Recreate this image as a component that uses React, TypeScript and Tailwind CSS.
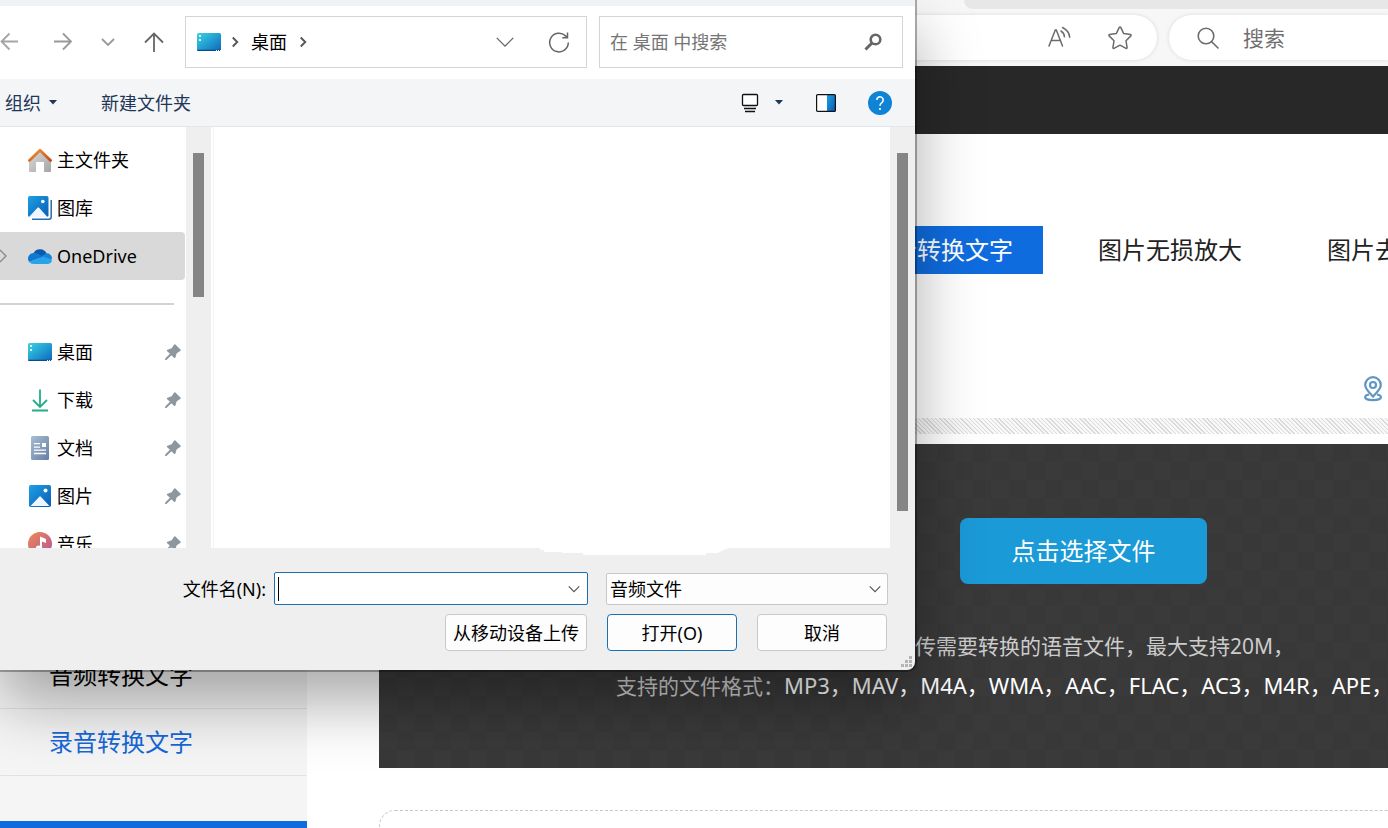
import React from "react";

type IconProps = { className?: string };

const Chevron = ({ className = "" }: IconProps) => (
  <svg viewBox="0 0 16 16" className={className} fill="none" stroke="currentColor" aria-hidden="true">
    <path d="M2 5l6 6 6-6" />
  </svg>
);

const DesktopIcon = () => (
  <svg viewBox="0 0 24 24" className="size-6 shrink-0" aria-hidden="true">
    <defs>
      <linearGradient id="desk" x1="0" y1="0" x2="1" y2="1">
        <stop offset="0" stopColor="#3ed3e0" />
        <stop offset="0.5" stopColor="#219fd2" />
        <stop offset="1" stopColor="#1265b8" />
      </linearGradient>
    </defs>
    <rect y="3" width="24" height="18" rx="1.5" fill="url(#desk)" />
    <path d="M0 19.8h24v0a1.4 1.4 0 0 1-1.4 1.2H1.4A1.4 1.4 0 0 1 0 19.8z" fill="#0b4a8c" />
    <path d="M2 5h2v2H2zM2 9h2v2H2z" fill="#d9fbff" />
    <path d="M19 20h1v1h-1zM21 20h1v1h-1zM23 20h1v1h-1z" fill="#e6f4ff" />
  </svg>
);

const HomeIcon = () => (
  <svg viewBox="0 0 24 24" className="size-6 shrink-0" aria-hidden="true">
    <defs>
      <linearGradient id="wall" x1="0" y1="0" x2="1" y2="1">
        <stop offset="0" stopColor="#dcdcdc" />
        <stop offset="1" stopColor="#a5a5a5" />
      </linearGradient>
      <linearGradient id="roof" x1="0" y1="0" x2="1" y2="1">
        <stop offset="0" stopColor="#f09a3a" />
        <stop offset="1" stopColor="#c5491a" />
      </linearGradient>
    </defs>
    <path d="M1 12L12 2l11 10v11a1 1 0 0 1-1 1h-6V14H8v10H2a1 1 0 0 1-1-1z" fill="url(#wall)" />
    <path d="M1.4 12.400L12 2.200l10.600 10.200" fill="none" stroke="url(#roof)" strokeWidth="2.800" strokeLinecap="round" strokeLinejoin="round" />
  </svg>
);

const BlueGradient = ({ id }: { id: string }) => (
  <defs>
    <linearGradient id={id} x1="0" y1="0" x2="1" y2="1">
      <stop offset="0" stopColor="#1ba2e4" />
      <stop offset="1" stopColor="#0c5bb5" />
    </linearGradient>
  </defs>
);

const GalleryIcon = () => (
  <svg viewBox="0 0 24 24" className="size-6 shrink-0" aria-hidden="true">
    <BlueGradient id="gal" />
    <path d="M4 23.2h17a2.2 2.2 0 0 0 2.2-2.2V4" fill="none" stroke="#276bb4" strokeWidth="1.5" />
    <rect width="20.5" height="21" rx="1.8" fill="url(#gal)" />
    <path d="M1 21l8.500-9.200a1 1 0 0 1 1.500 0l8.500 9.200z" fill="#eef7ff" />
    <circle cx="14.8" cy="5.5" r="1.8" fill="#fff" />
  </svg>
);

const PictureIcon = () => (
  <svg viewBox="0 0 24 24" className="size-6 shrink-0" aria-hidden="true">
    <BlueGradient id="pic" />
    <rect x="1" y="1" width="22" height="22" rx="1.8" fill="url(#pic)" />
    <path d="M2.5 22l8.8-9.3a1 1 0 0 1 1.5 0L21.500 22z" fill="#eef7ff" />
    <circle cx="17.500" cy="6.500" r="2" fill="#fff" />
  </svg>
);

const CloudIcon = () => (
  <svg viewBox="0 0 24 24" className="size-6 shrink-0" aria-hidden="true">
    <path d="M5.300 9.500a7.300 7.300 0 0 1 13.400.3l-5 5.200-8-4z" fill="#0a58b0" />
    <path d="M13.500 12l4.700-2.600a5.200 5.200 0 0 1 5.800 5.400l-5.500 2z" fill="#1583d8" />
    <path d="M5.400 9.100a5.500 5.500 0 0 0-4.200 8.900L15 12.700 9.800 9.800a6 6 0 0 0-4.400-.7z" fill="#0f78d0" />
    <path d="M1.100 17.900L15 12.600l8.900 3a4.300 4.300 0 0 1-4.100 4.400H5.600a5.600 5.600 0 0 1-4.500-2.100z" fill="#2aa2ea" />
  </svg>
);

const DownloadIcon = () => (
  <svg viewBox="0 0 24 24" className="size-6 shrink-0" fill="none" stroke="#22ad8c" strokeWidth="1.800" aria-hidden="true">
    <path d="M12 1.500v17M5 12l7 7 7-7M4 22.500h16" />
  </svg>
);

const DocumentIcon = () => (
  <svg viewBox="0 0 24 24" className="size-6 shrink-0" aria-hidden="true">
    <defs>
      <linearGradient id="doc" x1="0" y1="0" x2="1" y2="1">
        <stop offset="0" stopColor="#a9bdd3" />
        <stop offset="1" stopColor="#6580a3" />
      </linearGradient>
    </defs>
    <rect x="3" width="18" height="24" rx="1.500" fill="url(#doc)" />
    <path d="M6 7.700h6M6 11.200h6M6 14.200h12M6 17.500h12" stroke="#fff" strokeWidth="1.300" />
    <rect x="14" y="7" width="4" height="4" fill="#fff" />
  </svg>
);

const MusicIcon = () => (
  <svg viewBox="0 0 24 24" className="size-6 shrink-0" aria-hidden="true">
    <defs>
      <linearGradient id="mus" x1="0" y1="0" x2="1" y2="1">
        <stop offset="0" stopColor="#ec8a52" />
        <stop offset="1" stopColor="#b8529a" />
      </linearGradient>
    </defs>
    <circle cx="12" cy="12" r="12" fill="url(#mus)" />
    <path d="M12 4.500l6 2.500v4L14 9.500v7a3.200 3.200 0 1 1-2-2.800z" fill="#fff" />
  </svg>
);

const PinIcon = () => (
  <svg viewBox="0 0 16 16" className="size-4 shrink-0" fill="#8c979f" aria-hidden="true">
    <path d="M9 .7a.9.9 0 0 1 1.400-.2l5 5a.9.9 0 0 1-.2 1.400l-3.500 2.400-1.300 4.200a.9.9 0 0 1-1.400.3L6.400 11.300 1.500 15.900H.2v-1.300l4.700-4.900-2.700-2.500a.9.900 0 0 1 .3-1.500l4.200-1.400z" />
  </svg>
);

const places = [
  { label: "桌面", icon: <DesktopIcon /> },
  { label: "下载", icon: <DownloadIcon /> },
  { label: "文档", icon: <DocumentIcon /> },
  { label: "图片", icon: <PictureIcon /> },
  { label: "音乐", icon: <MusicIcon /> },
];

function BrowserBar() {
  return (
    <div className="flex shrink-0 flex-col bg-[#f7f7f7]">
      <div className="flex justify-end">
        <div className="h-[9px] w-[424px] rounded-bl-[9px] bg-[#e7e7e7]" />
      </div>
      <div className="flex gap-3 py-1.5 text-[#6b6b6b]">
        <div className="flex h-[45px] flex-1 items-center justify-end gap-9 rounded-r-full bg-white pr-6 shadow-[0_0_4px_rgba(0,0,0,0.12)]">
          <button aria-label="朗读" className="size-6">
            <svg viewBox="0 0 24 24" fill="none" stroke="currentColor" strokeWidth="1.500" strokeLinecap="round">
              <path d="M2 20L8.300 4h1L15.500 20M4.500 14.500h9M14 5c2 1.200 3.200 3.200 3.400 5.700M15.500 1.500c4.200 2 6.800 5.300 7.200 9.700" />
            </svg>
          </button>
          <button aria-label="收藏" className="size-[26px]">
            <svg viewBox="0 0 26 26" fill="none" stroke="currentColor" strokeWidth="1.500" strokeLinejoin="round">
              <path d="M12.300 2.400a.8.8 0 0 1 1.400 0l3 6.200 6.800 1a.8.800 0 0 1 .4 1.300l-4.900 4.900 1.100 6.800a.8.800 0 0 1-1.100.8L13 20.200l-6 3.200a.8.8 0 0 1-1.100-.8L7 15.800l-4.900-4.900a.8.8 0 0 1 .4-1.300l6.800-1z" />
            </svg>
          </button>
        </div>
        <label className="flex h-[45px] w-[219px] items-center gap-6 rounded-l-full bg-white pl-7 shadow-[0_0_4px_rgba(0,0,0,0.12)]">
          <svg viewBox="0 0 22 22" className="size-[22px] shrink-0" fill="none" stroke="currentColor" strokeWidth="1.600" strokeLinecap="round" aria-hidden="true">
            <circle cx="9" cy="9" r="7.800" />
            <path d="M14.700 14.700L21 21" />
          </svg>
          <input aria-label="搜索" placeholder="搜索" className="w-full min-w-0 text-[21px] outline-none placeholder:text-[#6f6f6f]" />
        </label>
      </div>
    </div>
  );
}

function Page() {
  return (
    <div className="flex flex-1 flex-col bg-white text-2xl text-[#222]">
      <BrowserBar />
      <div className="h-[68px] shrink-0 bg-[#282828]" />
      <nav className="flex gap-[25px] pt-[92px] pl-[839px] whitespace-nowrap">
        <a href="#record" className="flex h-12 shrink-0 items-center bg-[#0f6cdf] px-[30px] text-white">录音转换文字</a>
        <a href="#enlarge" className="flex h-12 shrink-0 items-center px-[30px]">图片无损放大</a>
        <a href="#remove" className="flex h-12 shrink-0 items-center px-[30px]">图片去</a>
      </nav>
      <div className="flex justify-end pt-[102px] pr-1.5 pb-4">
        <svg viewBox="0 0 18 26" className="h-[26px] w-[18px]" fill="none" stroke="#5f96c4" strokeWidth="2.200" aria-hidden="true">
          <path d="M9 20.500C5.500 16.500 1.200 13.200 1.200 9a7.800 7.800 0 0 1 15.600 0c0 4.200-4.300 7.500-7.800 11.500z" />
          <circle cx="9" cy="9" r="3" />
          <path d="M5 18.500c-2.600.4-3.900 1.400-3.900 2.700 0 1.700 3.500 2.900 7.900 2.900s7.900-1.200 7.900-2.900c0-1.300-1.300-2.300-3.900-2.700" />
        </svg>
      </div>
      <div className="h-4 shrink-0 bg-[repeating-linear-gradient(45deg,#dadada_0_1px,#f8f8f8_1px_3px)]" />
      <div className="flex flex-1 gap-[72px] pt-2.5">
        <aside className="flex w-[307px] shrink-0 flex-col bg-[#f5f5f5]">
          <div className="h-[198px] shrink-0" />
          <a href="#audio" className="flex h-[67px] items-center border-b border-[#e2e2e2] pl-[49px] text-black">音频转换文字</a>
          <a href="#record" className="flex h-[67px] items-center border-b border-[#e2e2e2] pl-[49px] text-[#1567d8]">录音转换文字</a>
          <div className="mt-[45px] min-h-[7px] flex-1 bg-[#0f6cdf]" />
        </aside>
        <main className="flex w-[1409px] shrink-0 flex-col">
          <section className="flex h-[324px] flex-col items-center bg-[#393939] bg-[repeating-conic-gradient(#383838_0_25%,#3a3a3a_0_50%)] bg-[length:36px_36px] pt-[74px] text-[21px] leading-[39px] whitespace-nowrap text-[#ccc]">
            <button className="h-[66px] w-[247px] rounded-lg bg-[#1a9ad7] text-2xl text-white">点击选择文件</button>
            <p className="pt-[43px]">请上传需要转换的语音文件，最大支持20M，</p>
            <p className="w-full pl-[237px]">
              支持的文件格式：
              <span className="text-[22px] text-white">MP3，MAV，M4A，WMA，AAC，FLAC，AC3，M4R，APE，</span>
            </p>
          </section>
          <div className="mt-[42px] min-h-[18px] flex-1 rounded-t-2xl border border-b-0 border-dashed border-[#c8c8c8]" />
        </main>
      </div>
    </div>
  );
}

function DialogAddressRow() {
  return (
    <div className="flex items-center bg-white pt-2.5 pr-3 pb-[11px] text-[#777]">
      <div className="flex shrink-0 items-center gap-7">
        <button aria-label="后退" className="w-[22px] text-[#a5a5a5]">
          <svg viewBox="0 0 22 22" fill="none" stroke="currentColor" strokeWidth="1.800"><path d="M18 10.500H1.500M9.500 2.500l-8 8 8 8" /></svg>
        </button>
        <button aria-label="前进" className="w-[22px] text-[#999]">
          <svg viewBox="0 0 22 22" fill="none" stroke="currentColor" strokeWidth="1.800"><path d="M4 10.500h17M13 2.500l8 8-8 8" /></svg>
        </button>
        <button aria-label="最近位置" className="w-4 text-[#999]"><Chevron className="size-4 stroke-[1.800px]" /></button>
        <button aria-label="上移" className="w-5 text-[#666]">
          <svg viewBox="0 0 20 20" fill="none" stroke="currentColor" strokeWidth="1.800"><path d="M10 20V1.500M1 10.500l9-9 9 9" /></svg>
        </button>
      </div>
      <div className="ml-[21px] flex h-[52px] w-[402px] shrink-0 items-center border border-[#d5d5d5] pl-[11px] text-black">
        <DesktopIcon />
        <Chevron className="ml-2 size-3 -rotate-90 stroke-[#555] stroke-[2.500px]" />
        <button className="mx-2.5">桌面</button>
        <Chevron className="size-3 -rotate-90 stroke-[#555] stroke-[2.500px]" />
        <div className="ml-auto flex items-center gap-8 pr-4 text-[#666]">
          <button aria-label="历史记录"><Chevron className="size-[22px] stroke-1" /></button>
          <button aria-label="刷新" className="size-[22px]">
            <svg viewBox="0 0 22 22" fill="none" stroke="currentColor" strokeWidth="1.500"><path d="M20.300 11.500a9.300 9.300 0 1 1-2.800-6.600l1.700 1.600M19.500 1.500v5.200h-5.200" /></svg>
          </button>
        </div>
      </div>
      <label className="ml-3 flex h-[52px] min-w-0 flex-1 items-center border border-[#d5d5d5] pr-5 pl-2.5">
        <input aria-label="在 桌面 中搜索" placeholder="在 桌面 中搜索" className="min-w-0 flex-1 outline-none placeholder:text-[#757575]" />
        <svg viewBox="0 0 18 18" className="size-[18px]" fill="none" stroke="#666" aria-hidden="true">
          <circle cx="11.500" cy="6.500" r="4.800" strokeWidth="2.600" />
          <path d="M8 10L1.500 16.500" strokeWidth="3" />
        </svg>
      </label>
    </div>
  );
}

function DialogToolbar() {
  return (
    <div className="flex h-12 items-center border-b border-[#e3e5e8] bg-[#f4f5f7] pr-[23px] pl-[5px] text-[#1e3657]">
      <button className="flex items-center gap-2">
        组织
        <svg viewBox="0 0 8 5" className="h-[5px] w-2" fill="currentColor" aria-hidden="true"><path d="M0 0h8L4 4.500z" /></svg>
      </button>
      <button className="ml-[44px]">新建文件夹</button>
      <button aria-label="更改视图" className="ml-auto flex items-center gap-4">
        <svg viewBox="0 0 18 20" className="h-5 w-[18px]" fill="none" stroke="#111" strokeWidth="1.300" aria-hidden="true">
          <rect x="1.500" y="1.500" width="15" height="11" rx="1" fill="#fff" />
          <path d="M3 15.500h12M4 18.500h10" />
        </svg>
        <svg viewBox="0 0 8 5" className="h-[5px] w-2" fill="currentColor" aria-hidden="true"><path d="M0 0h8L4 4.500z" /></svg>
      </button>
      <button aria-label="预览窗格" className="ml-[33px]">
        <svg viewBox="0 0 20 18" className="h-[18px] w-5">
          <BlueGradient id="pane" />
          <rect x="0.600" y="0.600" width="18.800" height="16.800" rx="1" fill="#fff" />
          <rect x="11" y="1" width="8" height="16" fill="url(#pane)" />
          <rect x="0.600" y="0.600" width="18.800" height="16.800" rx="1" fill="none" stroke="#111" strokeWidth="1.200" />
        </svg>
      </button>
      <button aria-label="帮助" className="ml-8">
        <svg viewBox="0 0 24 24" className="size-6">
          <circle cx="12" cy="12" r="12" fill="#0f83d5" />
          <path d="M8.800 9a3.200 3.200 0 1 1 5.200 2.500c-1.300 1-2 1.600-2 3.300" fill="none" stroke="#fff" strokeWidth="1.600" />
          <circle cx="12" cy="18" r="1.100" fill="#fff" />
        </svg>
      </button>
    </div>
  );
}

function DialogBody() {
  return (
    <div className="flex h-[421px] bg-white">
      <ul className="flex w-[186px] shrink-0 flex-col overflow-hidden pt-[9px] pr-px">
        <li className="flex h-12 shrink-0 items-center gap-[5px] pl-7"><HomeIcon />主文件夹</li>
        <li className="flex h-12 shrink-0 items-center gap-[5px] pl-7"><GalleryIcon />图库</li>
        <li className="flex h-12 shrink-0 items-center gap-[5px] rounded-r-sm bg-[#d9d9d9]">
          <svg viewBox="0 0 8 14" className="mr-[15px] h-3.5 w-2" fill="none" stroke="#888" strokeWidth="1.300" aria-hidden="true"><path d="M0 1l6 6-6 6" /></svg>
          <CloudIcon />OneDrive
        </li>
        <li className="flex h-12 shrink-0 items-center pr-[11px]"><hr className="w-full border-t-2 border-[#d2d2d2]" /></li>
        {places.map((p) => (
          <li key={p.label} className="flex h-12 shrink-0 items-center gap-[5px] pr-1 pl-7">
            {p.icon}
            <span className="flex-1">{p.label}</span>
            <PinIcon />
          </li>
        ))}
      </ul>
      <div className="w-[25px] shrink-0 bg-[#efefef] px-[7px] pt-[26px]">
        <div className="h-36 w-[11px] bg-[#858585]" />
      </div>
      <div className="ml-0.5 flex-1 border-l border-[#f3f3f3]" />
      <div className="w-[25px] shrink-0 bg-[#efefef] px-[7px] pt-[26px]">
        <div className="h-[358px] w-[11px] bg-[#858585]" />
      </div>
    </div>
  );
}

function DialogFooter() {
  return (
    <div className="relative flex flex-col gap-[9px] rounded-br-lg bg-[#efefef] pt-6 pb-[19px]">
      <svg viewBox="0 0 190 7" className="absolute top-0 left-[540px] h-[7px] w-[190px]" fill="#fff" aria-hidden="true">
        <path d="M0 0h190c-6 1-8 3-12 5h-12v2H43V5H22V4H4V2H0z" />
      </svg>
      <div className="flex items-center justify-end pr-[27px]">
        <label htmlFor="filename" className="mr-2">文件名(N):</label>
        <div className="flex h-[33px] w-[314px] items-center rounded-xs border border-[#1b6fb3] bg-white pr-1.5 pl-[3px]">
          <span className="h-6 w-px bg-black" />
          <input id="filename" className="min-w-0 flex-1 outline-none" />
          <button aria-label="显示历史文件名" className="text-[#555]"><Chevron className="size-3.5 stroke-[1.300px]" /></button>
        </div>
        <div className="ml-[18px] grid w-[282px] items-center">
          <select aria-label="文件类型" className="col-start-1 row-start-1 h-8 w-full appearance-none rounded-xs border border-[#c8c8c8] bg-[#fdfdfd] px-[3px]">
            <option>音频文件</option>
          </select>
          <Chevron className="pointer-events-none col-start-1 row-start-1 mr-1.5 size-3.5 justify-self-end stroke-[#555] stroke-[1.300px]" />
        </div>
      </div>
      <div className="flex justify-end gap-5 pr-7">
        <button className="h-[37px] w-[142px] rounded border border-[#c9c9c9] bg-[#fdfdfd]">从移动设备上传</button>
        <button className="h-[37px] w-[130px] rounded border border-[#1b6fb3] bg-[#fdfdfd]">打开(O)</button>
        <button className="h-[37px] w-[130px] rounded border border-[#c9c9c9] bg-[#fdfdfd]">取消</button>
      </div>
      <svg viewBox="0 0 12 12" className="absolute right-0.5 bottom-0.5 size-3" fill="#b5b5b5" aria-hidden="true">
        <path d="M8 0h3v3H8zM4 4h3v3H4zM8 4h3v3H8zM0 8h3v3H0zM4 8h3v3H4zM8 8h3v3H8z" />
      </svg>
    </div>
  );
}

export default function App() {
  return (
    <div className="relative flex min-h-screen flex-col overflow-hidden font-['Noto_Sans','Noto_Sans_CJK_SC',sans-serif]">
      <Page />
      <div
        role="dialog"
        aria-label="打开"
        className="absolute top-0 left-0 w-[915px] rounded-br-lg text-lg leading-6 text-black shadow-[0_0_0_2px_rgba(0,0,0,0.3),0_32px_64px_rgba(0,0,0,0.34)]"
      >
        <div className="h-1.5 bg-[#eff3f7]" />
        <DialogAddressRow />
        <DialogToolbar />
        <DialogBody />
        <DialogFooter />
      </div>
    </div>
  );
}
